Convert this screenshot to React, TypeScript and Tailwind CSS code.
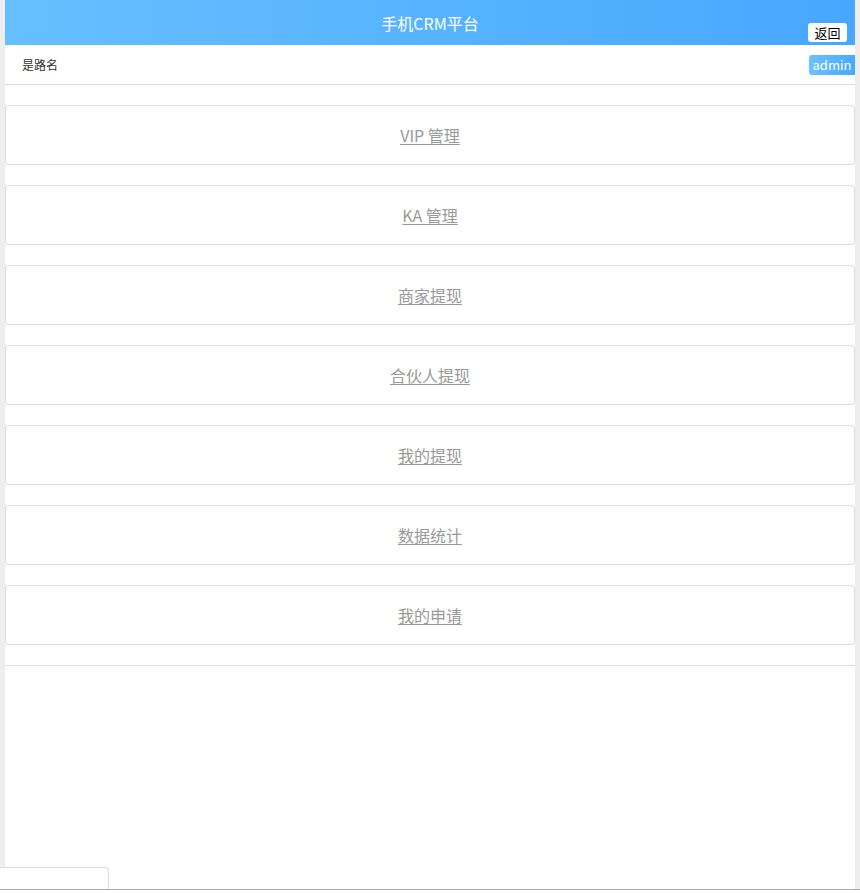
const menus = ['VIP 管理', 'KA 管理', '商家提现', '合伙人提现', '我的提现', '数据统计', '我的申请'];

export default function App() {
  return (
    <div
      className="relative h-[893px] overflow-hidden bg-[#eeeeee]"
      style={{ fontFamily: '"Noto Sans CJK SC", "Liberation Sans", sans-serif' }}
    >
      <div className="mx-[5px] h-full bg-white">
        <header className="relative flex h-[45px] items-center justify-center bg-gradient-to-r from-[#66bffe] to-[#47a7fe]">
          <h1 className="text-[16px] text-white">手机CRM平台</h1>
          <button className="absolute bottom-[3px] right-[8px] h-[19px] w-[39px] rounded-[3px] bg-white text-[13px] leading-[19px] text-black">
            返回
          </button>
        </header>

        <div className="flex h-[40px] items-center justify-between border-b border-[#dddddd] pl-[17px]">
          <span className="text-[12px] text-[#333]">是路名</span>
          <span className="flex h-[20px] w-[46px] items-center justify-center rounded-l-[3px] bg-gradient-to-r from-[#6cc2fe] to-[#48a8fe] text-[13px] text-white">
            admin
          </span>
        </div>

        <div className="flex flex-col gap-[20px] pt-[20px]">
          {menus.map((m) => (
            <div
              key={m}
              className="flex h-[60px] items-center justify-center rounded-[3px] border border-[#dddddd]"
            >
              <a href="#" className="text-[16px] text-[#999999] underline underline-offset-2">
                {m}
              </a>
            </div>
          ))}
        </div>
        <div className="mt-[20px] border-t border-[#dddddd]" />
      </div>

      <div className="fixed inset-x-0 bottom-0 flex flex-col">
        <div className="h-[22px] w-[109px] rounded-tr-[4px] border-r border-t border-[#dddddd] bg-white" />
        <div className="h-[4px] border-t border-[#aaaaaa] bg-white" />
      </div>
    </div>
  );
}
